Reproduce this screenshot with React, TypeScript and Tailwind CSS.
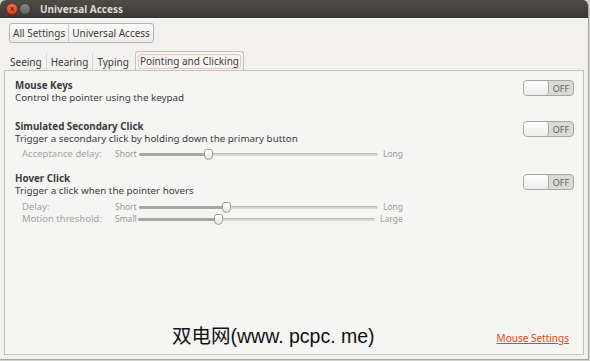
import React from "react";

const font = { fontFamily: '"Noto Sans", "Open Sans", "Noto Sans CJK SC", sans-serif' };

function Toggle() {
  return (
    <div className="flex h-[16px] w-[51px] rounded-[4px] border border-[#a8a6a1] bg-[#dcdad6] overflow-hidden">
      <div className="w-[25px] h-full rounded-[3px] border-r border-[#aaa8a3] bg-gradient-to-b from-[#ffffff] to-[#ecebe9]" />
      <div className="flex-1 flex items-center justify-center text-[9px] text-[#5a5a5a] leading-none">OFF</div>
    </div>
  );
}

function Slider({ label, left, right, pos, trackW, trackStart }: { label: string; left: string; right: string; pos: number; trackW: number; trackStart: number }) {
  return (
    <div className="flex items-center h-[12px] text-[8.5px] text-[#9b9a97] leading-none">
      <div className="w-[100px] pl-[7px] text-[9.5px] text-[#a4a3a0]">{label}</div>
      <div style={{ width: trackStart }}>{left}</div>
      <div className="relative h-[3px]" style={{ width: trackW }}>
        <div className="absolute inset-0 rounded-full bg-[#d9d8d5] border-t border-[#bdbcb9]" />
        <div className="absolute left-0 top-0 h-full rounded-full bg-[#a8a7a4]" style={{ width: pos }} />
        <div
          className="absolute top-[-4px] w-[9px] h-[11px] bg-gradient-to-b from-[#ffffff] to-[#e4e3e1] border border-[#9d9c98] rounded-t-[3px] rounded-b-[5px]"
          style={{ left: pos - 4 }}
        />
      </div>
      <div className="pl-[5px]">{right}</div>
    </div>
  );
}

export default function App() {
  return (
    <div className="w-[590px] h-[361px] bg-[#d2d0cc] overflow-hidden" style={font}>
      <div className="w-[589px] h-[360px] flex flex-col rounded-t-[6px] overflow-hidden border-r border-b border-[#a9a7a2] bg-[#f2f1f0]">
        {/* Title bar */}
        <div className="h-[18px] flex items-center bg-gradient-to-b from-[#4d4c47] to-[#3b3a36] border-b border-[#2e2d2a] shrink-0">
          <div className="ml-[6px] w-[12px] h-[12px] rounded-full bg-gradient-to-b from-[#f0734e] to-[#d9401a] border border-[#8e2b12] flex items-center justify-center text-[8px] text-[#5a1a08] leading-none font-bold">×</div>
          <div className="ml-[1px] w-[12px] h-[12px] rounded-full bg-gradient-to-b from-[#8a8883] to-[#66645f] border border-[#3a3935]" />
          <div className="ml-[9px] text-[10px] font-bold text-[#dfdbd2] leading-none">Universal Access</div>
        </div>
        <div className="h-[1px] bg-[#fdfdfc] shrink-0" />
        {/* Breadcrumb */}
        <div className="flex pl-[9px] pt-[4px] shrink-0">
          <div className="flex h-[20px] rounded-[3px] border border-[#b7b5b0] bg-gradient-to-b from-[#fafaf9] to-[#eeedeb] text-[10px] text-[#3c3c3c] leading-none">
            <div className="px-[3px] flex items-center border-r border-[#c8c6c1]">All Settings</div>
            <div className="px-[3px] flex items-center">Universal Access</div>
          </div>
        </div>
        {/* Tabs */}
        <div className="flex items-end pl-[4px] mt-[8px] h-[19px] shrink-0 text-[10px] text-[#3c3c3c] leading-none">
          <div className="flex items-center h-[17px] pl-[6px] pr-[4px]">Seeing</div>
          <div className="flex items-center h-[17px] px-[4px] border-l border-[#d8d6d2]">Hearing</div>
          <div className="flex items-center h-[17px] px-[4px] border-l border-[#d8d6d2]">Typing</div>
          <div className="flex items-center h-[19px] ml-[2px] px-[2px] border border-b-0 border-[#c3c1bc] rounded-t-[3px] bg-[#f6f5f4]">
            <span className="px-[1px] h-[15px] flex items-center rounded-[3px] border border-[#efc5b5]">Pointing and Clicking</span>
          </div>
        </div>
        {/* Panel */}
        <div className="mx-[4px] mb-[4px] flex-1 border border-[#c3c1bc] bg-[#f5f5f4] flex flex-col relative">
          <div className="pl-[10px] pr-[9px] pt-[9px] flex flex-col text-[#3c3c3c]">
            <div className="flex justify-between items-start">
              <div className="leading-[12px] text-[9.8px]">
                <div className="font-bold">Mouse Keys</div>
                <div>Control the pointer using the keypad</div>
              </div>
              <div><Toggle /></div>
            </div>
            <div className="flex justify-between items-start mt-[17px]">
              <div className="leading-[12px] text-[9.8px]">
                <div className="font-bold">Simulated Secondary Click</div>
                <div>Trigger a secondary click by holding down the primary button</div>
              </div>
              <div><Toggle /></div>
            </div>
            <div className="mt-[3px]">
              <Slider label="Acceptance delay:" left="Short" right="Long" pos={69} trackW={239} trackStart={24} />
            </div>
            <div className="flex justify-between items-start mt-[13px]">
              <div className="leading-[12px] text-[9.8px]">
                <div className="font-bold">Hover Click</div>
                <div>Trigger a click when the pointer hovers</div>
              </div>
              <div className="mt-[1px]"><Toggle /></div>
            </div>
            <div className="mt-[4px]">
              <Slider label="Delay:" left="Short" right="Long" pos={87} trackW={239} trackStart={24} />
            </div>
            <div>
              <Slider label="Motion threshold:" left="Small" right="Large" pos={80} trackW={237} trackStart={23} />
            </div>
          </div>
          <div className="flex-1" />
          <div className="flex items-end justify-between pb-[8px] pr-[14px]">
            <div className="ml-[167px] text-[19.5px] leading-none text-[#111]" style={{ fontFamily: '"Liberation Sans", "Noto Sans CJK SC", sans-serif' }}>双电网(www. pcpc. me)</div>
            <div className="text-[10px] text-[#dd4814] underline leading-none mb-[3px]">Mouse Settings</div>
          </div>
        </div>
      </div>
    </div>
  );
}
